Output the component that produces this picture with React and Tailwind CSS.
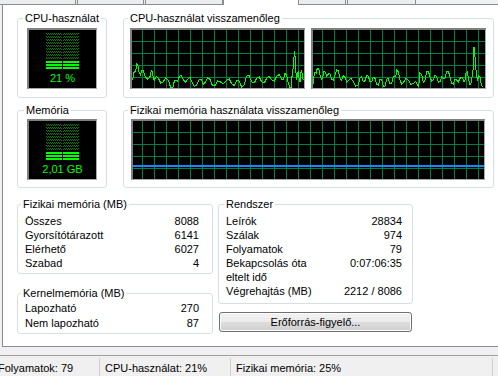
// Task manager "Teljesítmény" tab, Hungarian locale
const cpuA = [[38,240],[45,215],[50,192],[58,220],[65,212],[75,228],[90,230],[97,213],[103,240],[115,235],[130,245],[145,240],[158,265],[168,240],[178,230],[190,240],[205,235],[215,245],[230,255],[245,240],[255,248],[270,238],[285,258],[300,245],[320,240],[335,252],[350,242],[365,262],[380,228],[395,245],[410,235],[425,245],[440,235],[455,240],[470,228],[485,238],[495,220],[505,250],[513,265],[520,200],[523,152],[527,200],[530,240],[535,215],[540,245],[545,210],[550,240]]
const cpuB = [[38,262],[45,215],[52,205],[60,225],[68,233],[75,215],[85,222],[95,238],[105,225],[115,212],[125,240],[135,232],[145,242],[160,245],[175,255],[185,230],[195,242],[205,228],[215,245],[225,235],[235,255],[245,240],[255,258],[265,235],[275,250],[285,228],[290,210],[300,240],[310,248],[325,240],[340,250],[355,258],[360,218],[370,248],[380,215],[390,230],[400,240],[410,230],[420,245],[430,235],[440,215],[450,230],[460,252],[470,240],[480,235],[492,245],[498,218],[505,232],[512,255],[518,228],[522,140],[527,200],[533,240],[540,232],[548,260]]

function toPoints(arr, base, left, top) {
  // points were read off a 3x crop; add small jitter between them
  const out = []
  arr.forEach(([X, Y], i) => {
    const x = base + X / 3 - left
    const y = Y / 3 - top
    out.push(`${x.toFixed(1)},${y.toFixed(1)}`)
    const next = arr[i + 1]
    if (next) {
      const nx = base + next[0] / 3 - left
      const ny = next[1] / 3 - top
      const j = i % 2 === 0 ? -3 : 3
      out.push(`${((x + nx) / 2).toFixed(1)},${Math.min(57, (y + ny) / 2 + j).toFixed(1)}`)
    }
  })
  return out.join(' ')
}

function GridSvg({ w, h, ox, oy, children }) {
  const xs = []
  for (let x = ox; x < w; x += 12) xs.push(x)
  const ys = []
  for (let y = oy; y < h; y += 12) ys.push(y)
  return (
    <svg width={w} height={h} className="block" shapeRendering="crispEdges">
      <rect width={w} height={h} fill="#000" />
      {xs.map((x) => (
        <line key={'v' + x} x1={x + 0.5} x2={x + 0.5} y1={0} y2={h} stroke="#008040" />
      ))}
      {ys.map((y) => (
        <line key={'h' + y} x1={0} x2={w} y1={y + 0.5} y2={y + 0.5} stroke="#008040" />
      ))}
      {children}
    </svg>
  )
}

function Meter({ id, label }) {
  return (
    <div className="w-[70px] h-[61px] bg-black border-t-2 border-l-2 border-r border-b border-t-[#808080] border-l-[#808080] border-r-[#a8a8a8] border-b-[#a8a8a8] flex flex-col items-center">
      <svg width="34" height="36" className="block mt-[3px]" shapeRendering="crispEdges">
        <defs>
          <pattern id={id} width="2" height="3" patternUnits="userSpaceOnUse">
            <rect x="0" y="0" width="1" height="1" fill="#008000" />
            <rect x="1" y="1" width="1" height="1" fill="#008000" />
          </pattern>
        </defs>
        <rect x="0" y="0" width="16" height="27" fill={`url(#${id})`} />
        <rect x="17" y="0" width="16" height="27" fill={`url(#${id})`} />
        {[28, 31, 34].map((y) => (
          <g key={y}>
            <rect x="0" y={y} width="16" height="2" fill="#00ff00" />
            <rect x="17" y={y} width="16" height="2" fill="#00ff00" />
          </g>
        ))}
      </svg>
      <span className="mt-[3px] text-[11px] leading-[13px] text-[#00ff00]">{label}</span>
    </div>
  )
}

function Group({ title, className, legendClass, children }) {
  return (
    <fieldset className={`border border-[#d5dfe5] rounded-[3px] ${className}`}>
      <legend className={`px-[2px] text-[11px] leading-[13px] text-black ${legendClass}`}>{title}</legend>
      {children}
    </fieldset>
  )
}

function Rows({ rows, rowClass }) {
  return rows.map(([label, value]) => (
    <div key={label} className={`flex justify-between text-[11px] text-black ${rowClass}`}>
      <span>{label}</span>
      <span>{value}</span>
    </div>
  ))
}

const fizikai = [['Összes', '8088'], ['Gyorsítótárazott', '6141'], ['Elérhető', '6027'], ['Szabad', '4']]
const kernel = [['Lapozható', '270'], ['Nem lapozható', '87']]
const rendszer = [
  ['Leírók', '28834'],
  ['Szálak', '974'],
  ['Folyamatok', '79'],
  ['Bekapcsolás óta', '0:07:06:35'],
  ['eltelt idő', ''],
  ['Végrehajtás (MB)', '2212 / 8086'],
]

export default function App() {
  return (
    <div className="w-[498px] h-[376px] overflow-hidden bg-[#f0f0f0] font-['Liberation_Sans',Arial,sans-serif]">
      {/* tab strip, only the bottom edges show */}
      <div className="flex h-[5px]">
        <div className="w-[76px] border-r border-b border-[#898c95] bg-[#ececec]" />
        <div className="w-[1px] border-b border-[#898c95]" />
        <div className="w-[67px] border-l border-r border-b border-[#898c95] bg-[#ececec]" />
        <div className="w-[1px] border-b border-[#898c95]" />
        <div className="w-[78px] border-l border-r border-b border-[#898c95] bg-[#ececec]" />
        <div className="w-[76px] border-l border-r border-[#898c95] bg-white" />
        <div className="w-[47px] border-r border-b border-[#898c95] bg-[#ececec]" />
        <div className="w-[1px] border-b border-[#898c95]" />
        <div className="w-[69px] border-l border-r border-b border-[#898c95] bg-[#ececec]" />
        <div className="flex-1 border-b border-[#898c95]" />
      </div>

      <div className="ml-[2px] h-[342px] bg-white border-l border-b border-[#898c95] pl-[14px] pt-[7px]">
        <div className="flex gap-[16px]">
          <Group title="CPU-használat" className="w-[90px]" legendClass="ml-[5px]">
            <div className="pl-[9px] pt-[3px] pb-[8px]">
              <Meter id="cpuDots" label="21 %" />
            </div>
          </Group>
          <Group title="CPU-használat visszamenőleg" className="w-[371px]" legendClass="ml-[4px]">
            <div className="flex gap-[6px] pl-[6px] pt-[3px] pb-[8px]">
              <div className="w-[175px] h-[61px] border-t-2 border-l-2 border-r border-b border-t-[#808080] border-l-[#808080] border-r-[#a8a8a8] border-b-[#a8a8a8]">
                <GridSvg w={172} h={58} ox={10} oy={11}>
                  <polyline points={toPoints(cpuA, 120, 132, 30)} fill="none" stroke="#00ff00" strokeWidth="1" />
                </GridSvg>
              </div>
              <div className="w-[175px] h-[61px] border-t-2 border-l-2 border-r border-b border-t-[#808080] border-l-[#808080] border-r-[#a8a8a8] border-b-[#a8a8a8]">
                <GridSvg w={172} h={58} ox={9} oy={11}>
                  <polyline points={toPoints(cpuB, 300, 313, 30)} fill="none" stroke="#00ff00" strokeWidth="1" />
                </GridSvg>
              </div>
            </div>
          </Group>
        </div>

        <div className="flex gap-[16px] mt-[6px]">
          <Group title="Memória" className="w-[90px]" legendClass="ml-[6px]">
            <div className="pl-[9px] pt-[2px] pb-[7px]">
              <Meter id="memDots" label="2,01 GB" />
            </div>
          </Group>
          <Group title="Fizikai memória használata visszamenőleg" className="w-[371px]" legendClass="ml-[4px]">
            <div className="pl-[7px] pt-[2px] pb-[7px]">
              <div className="w-[354px] h-[61px] border-t-2 border-l-2 border-r border-b border-t-[#808080] border-l-[#808080] border-r-[#a8a8a8] border-b-[#a8a8a8]">
                <GridSvg w={351} h={58} ox={9} oy={11}>
                  <rect x="0" y="44" width="351" height="2" fill="#1587ff" />
                </GridSvg>
              </div>
            </div>
          </Group>
        </div>

        <div className="flex gap-[5px] mt-[10px]">
          <div className="w-[196px] flex flex-col">
            <Group title="Fizikai memória (MB)" className="w-[196px]" legendClass="ml-[3px]">
              <div className="pl-[7px] pr-[13px] pt-[3px] pb-[3px]">
                <Rows rows={fizikai} rowClass="leading-[14px]" />
              </div>
            </Group>
            <Group title="Kernelmemória (MB)" className="w-[196px] mt-[13px]" legendClass="ml-[3px]">
              <div className="pl-[7px] pr-[13px] pt-[1px] pb-[2px]">
                <Rows rows={kernel} rowClass="leading-[15px]" />
              </div>
            </Group>
          </div>
          <div className="w-[195px] flex flex-col">
            <Group title="Rendszer" className="w-[195px]" legendClass="ml-[5px]">
              <div className="pl-[7px] pr-[10px] pt-[3px] pb-[5px]">
                <Rows rows={rendszer} rowClass="leading-[14px]" />
              </div>
            </Group>
            <button className="mt-[8px] ml-[1px] w-[193px] h-[20px] rounded-[3px] border border-[#707070] bg-[linear-gradient(#f2f2f2,#ebebeb_50%,#dddddd_50%,#cfcfcf)] shadow-[inset_0_0_0_1px_#fcfcfc] text-[11px] leading-[16px] text-black">
              Erőforrás-figyelő...
            </button>
          </div>
        </div>
      </div>

      <div className="mt-[8px] h-[21px] border-t border-[#a0a0a0] bg-[#f0f0f0] flex text-[11px] leading-[16px] text-black">
        <div className="w-[101px] -ml-[2px] pt-[4px] whitespace-nowrap">Folyamatok: 79</div>
        <div className="w-px h-[18px] mt-[2px] bg-[#d0d0d0]" />
        <div className="w-[130px] pl-[5px] pt-[4px] whitespace-nowrap">CPU-használat: 21%</div>
        <div className="w-px h-[18px] mt-[2px] bg-[#d0d0d0]" />
        <div className="w-[261px] pl-[5px] pt-[4px] whitespace-nowrap">Fizikai memória: 25%</div>
        <div className="w-px h-[18px] mt-[2px] bg-[#d0d0d0]" />
      </div>
    </div>
  )
}
